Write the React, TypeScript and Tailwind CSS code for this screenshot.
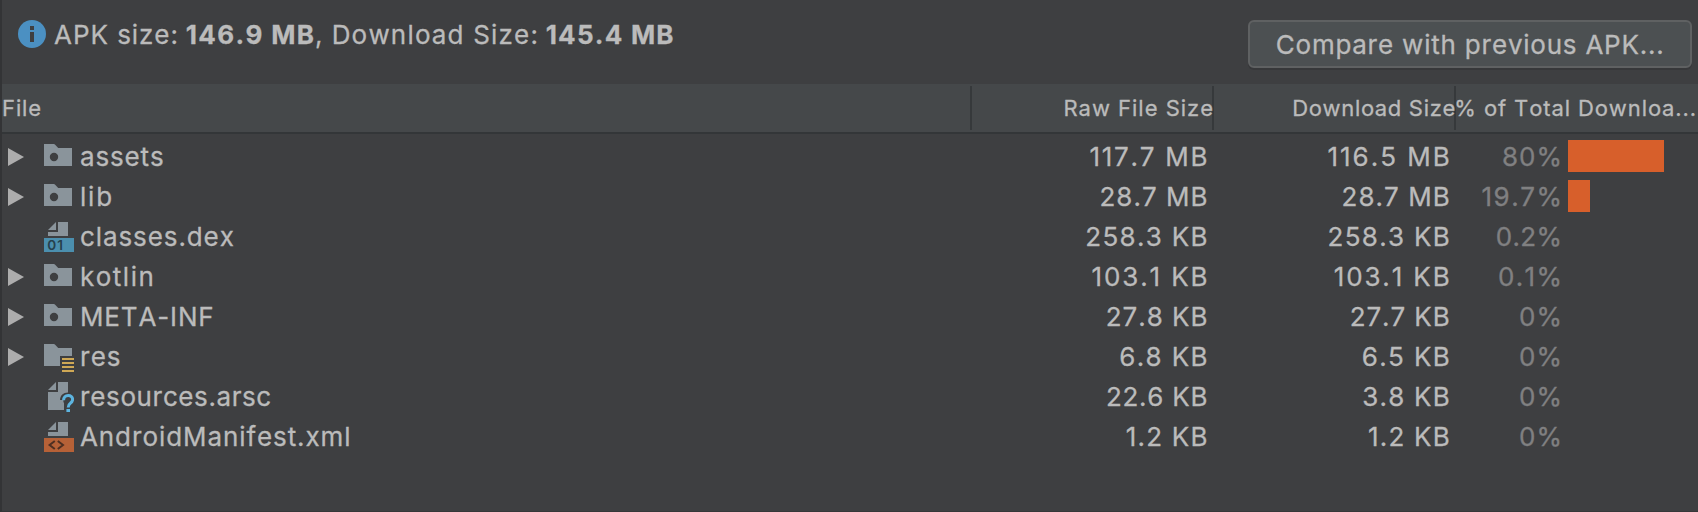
import React from 'react';

type IconKind = 'folder' | 'res' | 'dex' | 'unknown' | 'manifest';

// A string with the tracking, in pixels, that it is set with.
type Label = [text: string, tracking: number];

type Entry = {
  name: Label;
  icon: IconKind;
  expandable: boolean;
  raw: Label;
  download: Label;
  percent: Label;
  bar: number;
};

const entries: Entry[] = [
  { name: ['assets', 0.85], icon: 'folder', expandable: true, raw: ['117.7 MB', 1.73], download: ['116.5 MB', 1.97], percent: ['80%', 0.99], bar: 96 },
  { name: ['lib', 1.8], icon: 'folder', expandable: true, raw: ['28.7 MB', 1.02], download: ['28.7 MB', 1.02], percent: ['19.7%', 1.54], bar: 22 },
  { name: ['classes.dex', 0.9], icon: 'dex', expandable: false, raw: ['258.3 KB', 1.29], download: ['258.3 KB', 1.29], percent: ['0.2%', 0.34], bar: 0 },
  { name: ['kotlin', 1.5], icon: 'folder', expandable: true, raw: ['103.1 KB', 1.87], download: ['103.1 KB', 1.87], percent: ['0.1%', 1.33], bar: 0 },
  { name: ['META-INF', 0.85], icon: 'folder', expandable: true, raw: ['27.8 KB', 0.96], download: ['27.7 KB', 0.9], percent: ['0%', 1.07], bar: 0 },
  { name: ['res', 0.95], icon: 'res', expandable: true, raw: ['6.8 KB', 1.34], download: ['6.5 KB', 1.33], percent: ['0%', 1.07], bar: 0 },
  { name: ['resources.arsc', 0.58], icon: 'unknown', expandable: false, raw: ['22.6 KB', 0.75], download: ['3.8 KB', 1.19], percent: ['0%', 1.07], bar: 0 },
  { name: ['AndroidManifest.xml', 0.9], icon: 'manifest', expandable: false, raw: ['1.2 KB', 1.19], download: ['1.2 KB', 1.19], percent: ['0%', 1.07], bar: 0 },
];

// The negative margin takes back the tracking after the last character.
function Tracked({ label: [text, tracking] }: { label: Label }) {
  return (
    <span className="pt-0.5" style={{ letterSpacing: tracking, marginRight: -tracking }}>
      {text}
    </span>
  );
}

function FileIcon({ kind }: { kind: IconKind }) {
  return (
    <svg viewBox="0 0 16 16" className="size-8 shrink-0">
      {kind === 'folder' && (
        <path
          fill="#8a949b"
          fillRule="evenodd"
          d="M1 2h4.6c.5 0 .8.15 1.1.5L8.1 4H15v9H1zM6 6.4a2.1 2.1 0 1 0 0 4.2 2.1 2.1 0 0 0 0-4.2z"
        />
      )}
      {kind === 'res' && (
        <>
          <path fill="#8a949b" d="M1 2h4.6c.5 0 .8.15 1.1.5L8.1 4H15v4H9v5H1z" />
          <path fill="#cfa855" d="M10 9h6v1h-6zM10 11h6v1h-6zM10 13h6v1h-6zM10 15h6v1h-6z" />
        </>
      )}
      {(kind === 'dex' || kind === 'manifest') && (
        <>
          <path fill="#8a949b" d="M7 1v4H3zM8 1h5v7H3V6h5z" />
          <path fill={kind === 'dex' ? '#4b8fae' : '#b66137'} d="M1 9h15v7H1z" />
        </>
      )}
      {kind === 'dex' && (
        <text x="2.6" y="15.05" fill="#26414d" fontFamily="Inter, sans-serif" fontSize="6.8" fontWeight="600" letterSpacing="0.5">
          01
        </text>
      )}
      {kind === 'manifest' && (
        <path d="M6.4 10.5 3.8 12.5l2.6 2M7.9 10.5l2.6 2-2.6 2" fill="none" stroke="#4e2f22" strokeWidth="1" />
      )}
      {kind === 'unknown' && (
        <>
          <path fill="#8a949b" d="M7 1v4H3zM8 1h5v5.2c-2.4 0-3.9 1.4-4 3.8h1.7v1.2H11V15H3V6h5z" />
          <path
            d="M10.8 10.1c0-1.5.9-2.4 2.3-2.4 1.3 0 2.2.8 2.2 2 0 .9-.5 1.4-1.1 1.9-.8.6-1.1 1-1.1 2.1"
            fill="none"
            stroke="#5db4df"
            strokeWidth="1.5"
          />
          <path fill="#5db4df" d="M12.2 14.5H14V16h-1.8z" />
        </>
      )}
    </svg>
  );
}

function InfoIcon() {
  return (
    <svg viewBox="0 0 16 16" className="size-8 shrink-0">
      <circle cx="8" cy="8" r="7" fill="#4b90c2" />
      <path fill="#3e3f41" d="M7 4h2v2H7zM7 7h2v5H7z" />
    </svg>
  );
}

function Header() {
  return (
    <div className="grid h-[50px] grid-cols-[970px_242px_242px_240px] border-b-2 border-[#333638] bg-[#45484a] text-[22px] leading-[48px]">
      <div className="my-0.5 flex h-11 items-center border-r-2 border-[#36393b]">
        <span className="tracking-[0.9px]">File</span>
      </div>
      <div className="my-0.5 flex h-11 items-center justify-end border-r-2 border-[#36393b]">
        <span className="-mr-[2px] tracking-[0.98px]">Raw File Size</span>
      </div>
      <div className="my-0.5 flex h-11 items-center justify-end border-r-2 border-[#36393b]">
        <span className="-mr-[2px] tracking-[0.68px]">Download Size</span>
      </div>
      <div className="my-0.5 -ml-[1.7px] flex h-11 items-center">
        <span className="tracking-[0.9px]">% of Total Downloa...</span>
      </div>
    </div>
  );
}

function Row({ entry }: { entry: Entry }) {
  return (
    <div className="grid h-10 grid-cols-[970px_242px_242px_242px] items-center">
      <div className="flex h-10 items-center">
        <div className="flex w-10 pl-1.5">
          {entry.expandable && (
            <svg viewBox="0 0 16 18" className="mt-0.5 h-[18px] w-4">
              <path fill="#adadad" d="M0 0 16 9 0 18z" />
            </svg>
          )}
        </div>
        <FileIcon kind={entry.icon} />
        <div className="ml-1.5 flex">
          <Tracked label={entry.name} />
        </div>
      </div>
      <div className="flex h-10 items-center justify-end pr-[6.5px]">
        <Tracked label={entry.raw} />
      </div>
      <div className="flex h-10 items-center justify-end pr-[6.3px]">
        <Tracked label={entry.download} />
      </div>
      <div className="flex h-10 items-center">
        <div className="flex w-[112px] justify-end pr-[6px] text-[#808081]">
          <Tracked label={entry.percent} />
        </div>
        <div className="h-8 bg-[#d75f2b]" style={{ width: entry.bar }} />
      </div>
    </div>
  );
}

export default function App() {
  return (
    <div className="flex h-[512px] w-[1698px] flex-col overflow-hidden whitespace-nowrap border-b border-l-2 border-b-[#363739] border-l-[#333436] bg-[#3e3f41] font-['Inter','Liberation_Sans',sans-serif] text-[26px] leading-10 text-[#bbbbbb] [-webkit-text-stroke:0.3px] [font-kerning:none]">
      <div className="flex h-[84px] shrink-0 items-start justify-between pl-3.5 pr-1.5">
        <div className="mt-[15px] flex h-10 items-center">
          <div className="mt-[-2px] flex">
            <InfoIcon />
          </div>
          <div className="ml-[6px] flex">
            <span className="tracking-[0.95px]">APK size:</span>
            <b className="ml-[6.9px] tracking-[1.35px]">146.9 MB</b>
            <span className="-ml-[0.5px]">,</span>
            <span className="ml-[9.2px] tracking-[1.2px]">Download Size:</span>
            <b className="ml-[6.5px] tracking-[1.24px]">145.4 MB</b>
          </div>
        </div>
        <button className="mt-5 flex h-12 w-[444px] items-center rounded-md border-2 border-[#5f6162] bg-[#4c5052] pl-[25.8px] pt-0.5 shadow-[0_2px_0_#37383a]">
          <span className="tracking-[0.77px]">Compare with previous APK...</span>
        </button>
      </div>
      <Header />
      <div className="flex flex-col pt-0.5">
        {entries.map((entry) => (
          <Row key={entry.name[0]} entry={entry} />
        ))}
      </div>
    </div>
  );
}
